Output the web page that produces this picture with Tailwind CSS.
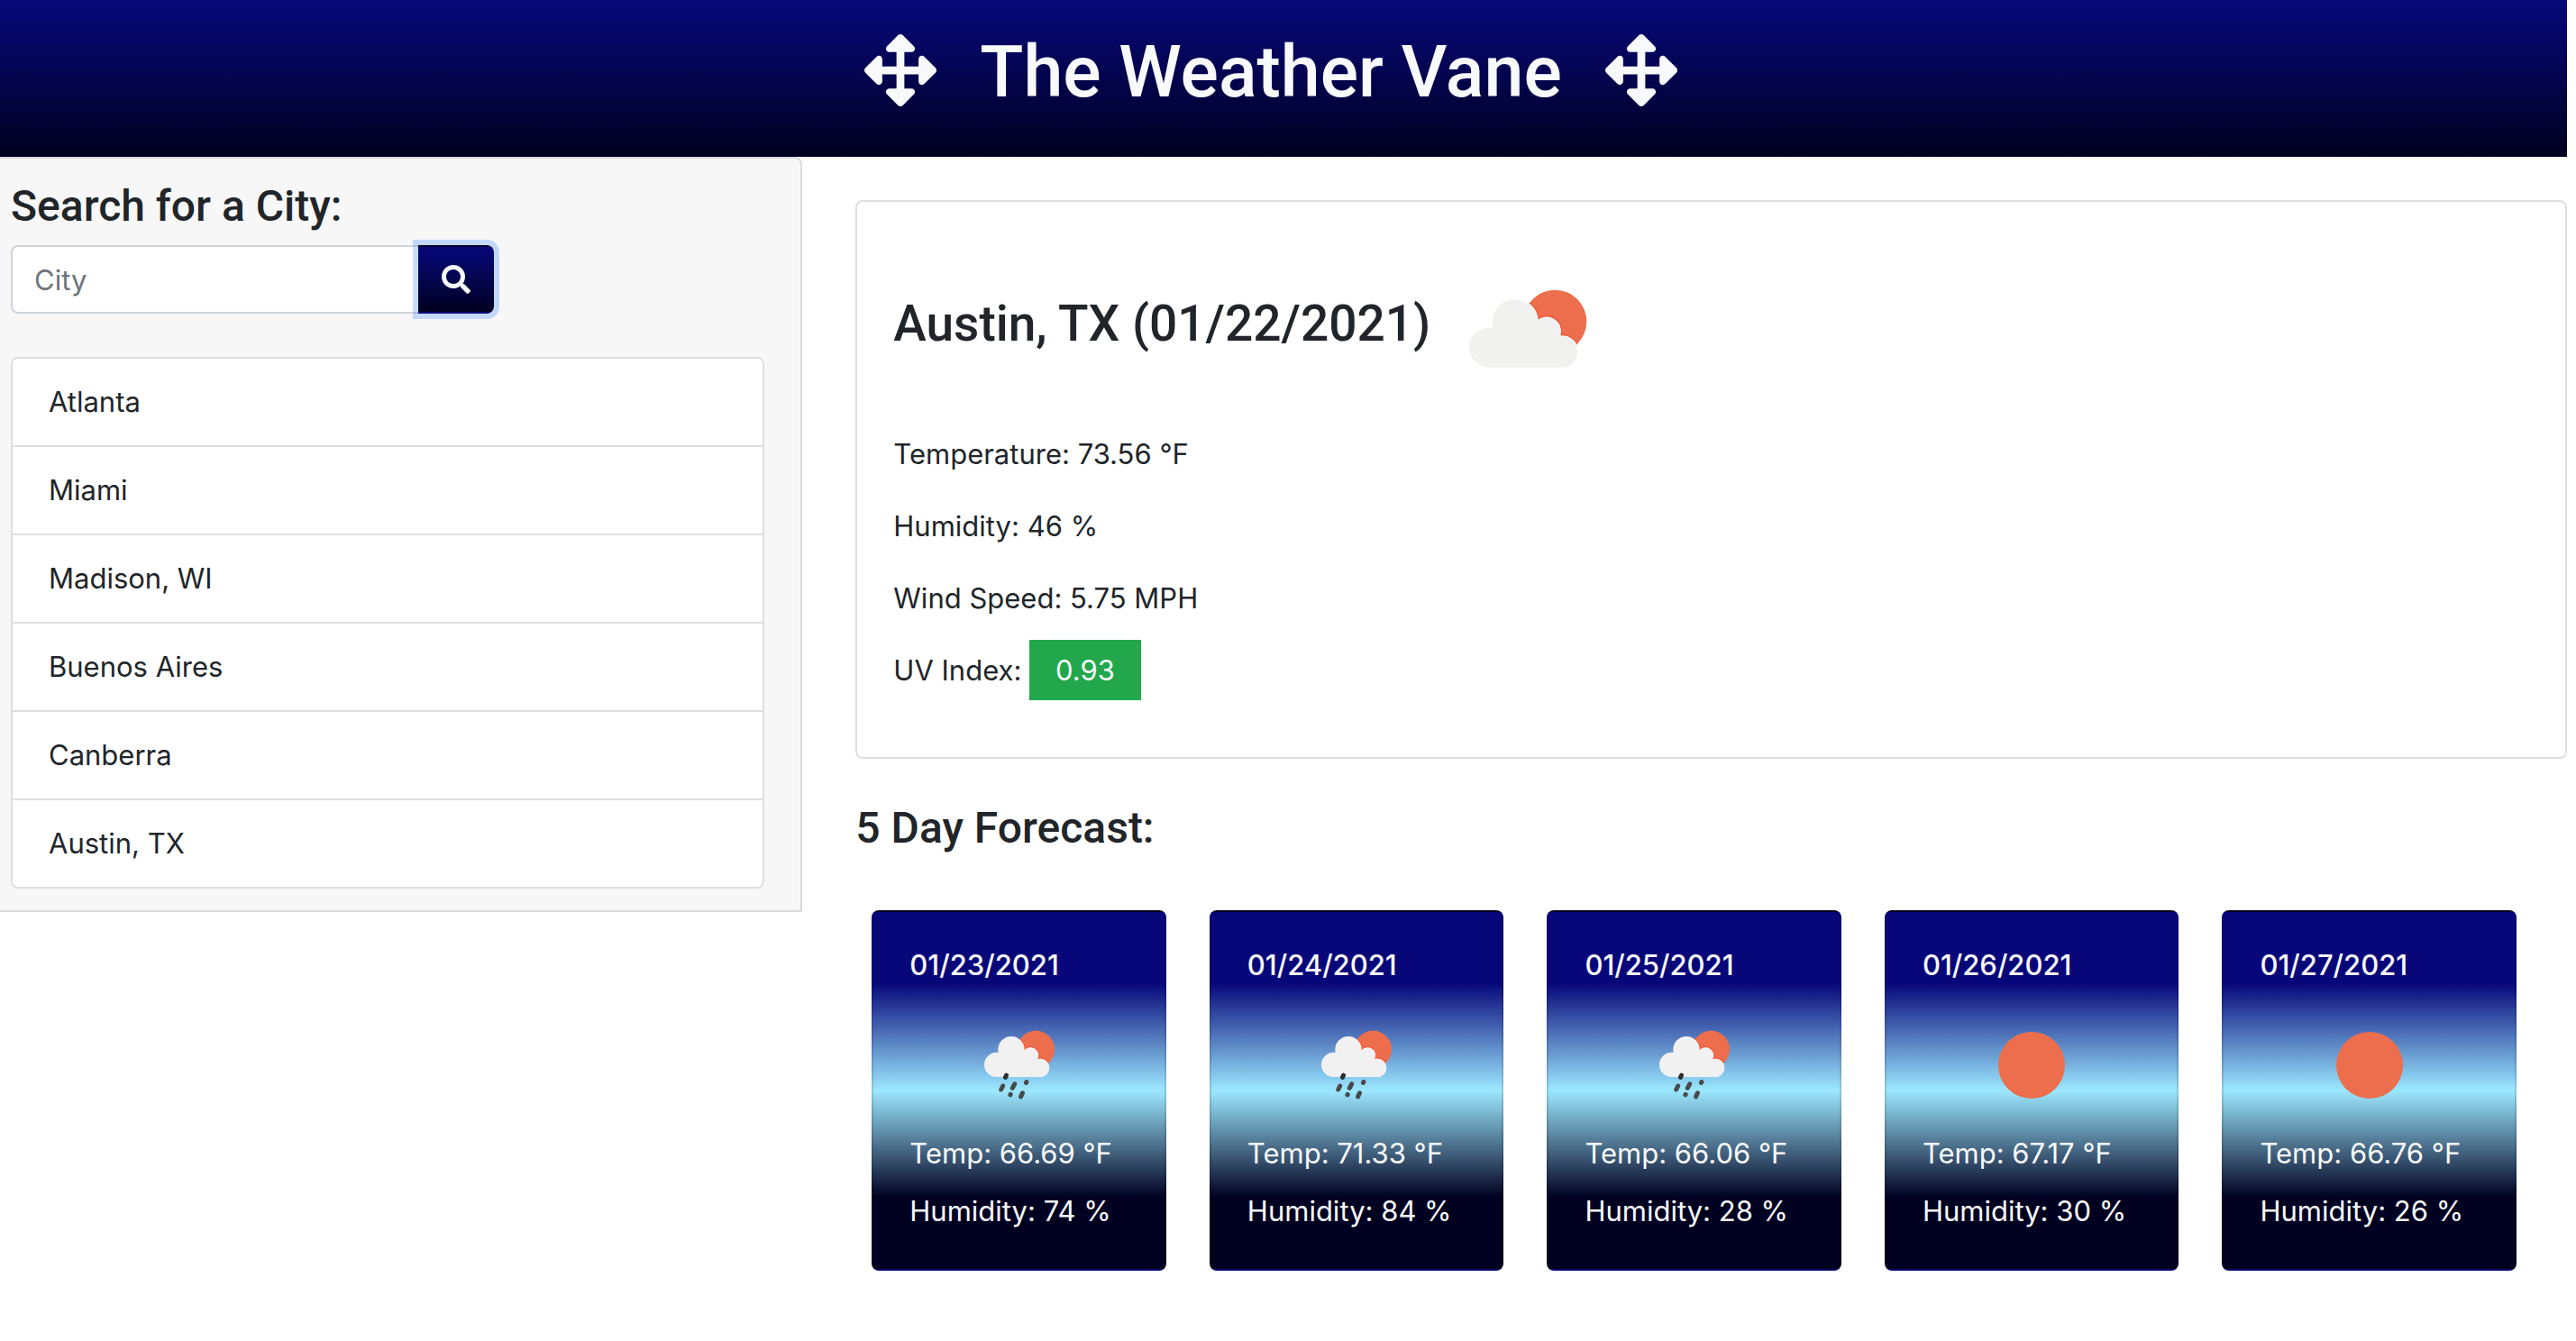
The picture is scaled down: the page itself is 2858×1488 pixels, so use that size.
<!DOCTYPE html>
<html lang="en">
<head>
<meta charset="utf-8">
<meta name="viewport" content="width=device-width, initial-scale=1">
<title>The Weather Vane</title>
<script src="https://cdn.jsdelivr.net/npm/@tailwindcss/browser@4"></script>
</head>
<body class="bg-white pr-2.5 font-['Inter',sans-serif] text-[31px] leading-[48px] text-[#212529]">

<!-- Shared icon shapes -->
<svg class="absolute size-0" aria-hidden="true">
  <defs>
    <symbol id="arrows" viewBox="0 0 512 512">
      <path fill="currentColor" d="M352.201 425.775l-79.196 79.196c-9.373 9.373-24.568 9.373-33.941 0l-79.196-79.196c-15.119-15.119-4.411-40.971 16.971-40.970h51.162L228 284H127.196v51.162c0 21.382-25.851 32.090-40.971 16.971L7.029 272.937c-9.373-9.373-9.373-24.569 0-33.941L86.225 159.800c15.119-15.119 40.971-4.411 40.971 16.971V228H228V127.196h-51.230c-21.382 0-32.090-25.851-16.971-40.971l79.196-79.196c9.373-9.373 24.568-9.373 33.941 0l79.196 79.196c15.119 15.119 4.411 40.971-16.971 40.971h-51.162V228h100.804v-51.162c0-21.382 25.851-32.090 40.970-16.971l79.196 79.196c9.373 9.373 9.373 24.569 0 33.941L425.773 352.200c-15.119 15.119-40.971 4.411-40.970-16.971V284H284v100.804h51.230c21.382 0 32.090 25.851 16.971 40.971z"/>
    </symbol>
    <clipPath id="sun-lg"><circle cx="130.300" cy="92.700" r="35"/></clipPath>
    <g id="cloud-lg">
      <circle cx="57" cy="121.500" r="22"/><circle cx="85.300" cy="93.300" r="25"/>
      <circle cx="121" cy="103.500" r="14.500"/><circle cx="138" cy="126.700" r="17"/>
      <path d="M57 143.700H138V115H121V100H75V115H57z"/>
    </g>
    <clipPath id="sun-sm"><circle cx="68.300" cy="32.300" r="20.700"/></clipPath>
    <g id="cloud-sm">
      <circle cx="24.700" cy="49.400" r="13.700"/><circle cx="41" cy="32.700" r="14.700"/>
      <circle cx="62.300" cy="39" r="9"/><circle cx="73" cy="52.800" r="10.400"/>
      <path d="M24.700 63.100H73V46H62V36H35V46H24.700z"/>
    </g>
    <symbol id="partly-cloudy" viewBox="0 0 200 200">
      <circle cx="130.300" cy="92.700" r="35" fill="#ec6e4c"/>
      <g clip-path="url(#sun-lg)">
        <use href="#cloud-lg" fill="#ee5a38" stroke="#ee5a38" stroke-width="6"/>
        <use href="#cloud-lg" fill="#eef5fa" stroke="#eef5fa" stroke-width="3"/>
      </g>
      <use href="#cloud-lg" fill="#f1f1f0"/>
    </symbol>
    <symbol id="rain" viewBox="0 0 100 100">
      <circle cx="68.300" cy="32.300" r="20.700" fill="#ec6e4c"/>
      <g clip-path="url(#sun-sm)">
        <use href="#cloud-sm" fill="#fb4f30" stroke="#fb4f30" stroke-width="2"/>
      </g>
      <use href="#cloud-sm" fill="#f1f1f2"/>
      <g stroke="#48484a" stroke-width="5" stroke-linecap="round">
        <path d="M35.500 61.200L34.500 63.400" stroke="#2e2e2e"/>
        <path d="M31.700 73L29.700 77"/><path d="M44.700 70.800L42.300 75.400"/>
        <path d="M57.900 68.600L57.500 69.400"/><path d="M40.200 82.400L39.900 82.900"/><path d="M53.400 80.900L51.600 84.900"/>
      </g>
    </symbol>
    <symbol id="sun" viewBox="0 0 100 100"><circle cx="50" cy="50" r="37" fill="#ec6e4c"/></symbol>
  </defs>
</svg>

<header class="flex items-center justify-center gap-12 bg-linear-to-b/srgb from-[#07087a] to-[#000020] pt-[30px] pr-7 pb-12 text-[#f8f9fa]">
  <svg class="size-20" aria-hidden="true"><use href="#arrows"/></svg>
  <h1 class="pt-1 font-['Roboto',sans-serif] text-[79px] leading-[92px] font-medium">The Weather Vane</h1>
  <svg class="size-20" aria-hidden="true"><use href="#arrows"/></svg>
</header>

<div class="grid grid-cols-3 items-start">
  <aside class="mr-[59px] rounded-tr-lg border-2 border-l-0 border-[#d9d9d9] bg-[#f7f7f7] pt-6 pr-10 pb-6 pl-3">
    <form>
      <label for="city" class="mb-3.5 block font-['Roboto',sans-serif] text-[48px] leading-[58px] font-medium">Search for a City:</label>
      <div class="flex w-[536px] max-w-full">
        <input id="city" type="text" placeholder="City" class="h-[76px] min-w-0 flex-1 rounded-l-lg border-2 border-r-0 border-[#ced4da] bg-white px-6 outline-none placeholder:text-[#6c757d]">
        <button type="button" aria-label="Search" class="flex h-[76px] w-[84px] items-center justify-center rounded-r-lg border-2 border-transparent bg-linear-to-b/srgb from-[#07087a] to-[#000020] text-[#f8f9fa] shadow-[0_0_0_6px_rgba(38,118,255,0.25)]">
          <svg class="size-8" viewBox="0 0 512 512" aria-hidden="true"><path fill="currentColor" d="M505 442.700L405.300 343c-4.500-4.500-10.600-7-17-7H372c27.600-35.300 44-79.700 44-128C416 93.100 322.900 0 208 0S0 93.100 0 208s93.100 208 208 208c48.300 0 92.700-16.400 128-44v16.300c0 6.400 2.500 12.500 7 17l99.700 99.700c9.400 9.400 24.600 9.400 33.900 0l28.300-28.300c9.400-9.400 9.400-24.600.1-34zM208 336c-70.700 0-128-57.200-128-128 0-70.700 57.200-128 128-128 70.700 0 128 57.200 128 128 0 70.700-57.200 128-128 128z"/></svg>
        </button>
      </div>
    </form>
    <ul class="mt-12 divide-y-2 divide-[#dfdfdf] overflow-hidden rounded-lg border-2 border-[#dfdfdf] bg-white">
      <li class="px-10 py-6">Atlanta</li>
      <li class="px-10 py-6">Miami</li>
      <li class="px-10 py-6">Madison, WI</li>
      <li class="px-10 py-6">Buenos Aires</li>
      <li class="px-10 py-6">Canberra</li>
      <li class="px-10 py-6">Austin, TX</li>
    </ul>
  </aside>

  <main class="col-span-2 pt-12">
    <section class="rounded-lg border-2 border-[#dfdfdf] p-10">
      <div class="mb-4 flex items-center gap-2">
        <h2 class="pb-2.5 font-['Roboto',sans-serif] text-[55px] leading-[68px] font-medium">Austin, TX (01/22/2021)</h2>
        <svg class="size-[200px]" role="img" aria-label="Partly cloudy"><use href="#partly-cloudy"/></svg>
      </div>
      <p class="mb-8">Temperature: 73.56 °F</p>
      <p class="mb-8">Humidity: 46 %</p>
      <p class="mb-8">Wind Speed: 5.75 MPH</p>
      <p class="mb-8">UV Index: <span class="bg-[#22a74c] px-[29px] py-[15px] text-[#f8f9fa]">0.93</span></p>
    </section>

    <h2 class="mt-12 font-['Roboto',sans-serif] text-[48px] leading-[58px] font-medium">5 Day Forecast:</h2>

    <div class="mt-[62px] grid grid-cols-5 gap-12 pr-14 pl-[18px]">
      <article class="rounded-lg border-2 border-black/12 bg-linear-to-b/srgb from-[#07077a] from-20% via-[#9ce8ff] via-50% to-[#000020] to-80% p-10 whitespace-nowrap text-[#f8f9fa]">
        <h3 class="leading-[38px] font-medium">01/23/2021</h3>
        <svg class="mx-auto mt-[42px] mb-6 size-[100px]" role="img" aria-label="Rain"><use href="#rain"/></svg>
        <p class="mb-4">Temp: 66.69 °F</p>
        <p>Humidity: 74 %</p>
      </article>
      <article class="rounded-lg border-2 border-black/12 bg-linear-to-b/srgb from-[#07077a] from-20% via-[#9ce8ff] via-50% to-[#000020] to-80% p-10 whitespace-nowrap text-[#f8f9fa]">
        <h3 class="leading-[38px] font-medium">01/24/2021</h3>
        <svg class="mx-auto mt-[42px] mb-6 size-[100px]" role="img" aria-label="Rain"><use href="#rain"/></svg>
        <p class="mb-4">Temp: 71.33 °F</p>
        <p>Humidity: 84 %</p>
      </article>
      <article class="rounded-lg border-2 border-black/12 bg-linear-to-b/srgb from-[#07077a] from-20% via-[#9ce8ff] via-50% to-[#000020] to-80% p-10 whitespace-nowrap text-[#f8f9fa]">
        <h3 class="leading-[38px] font-medium">01/25/2021</h3>
        <svg class="mx-auto mt-[42px] mb-6 size-[100px]" role="img" aria-label="Rain"><use href="#rain"/></svg>
        <p class="mb-4">Temp: 66.06 °F</p>
        <p>Humidity: 28 %</p>
      </article>
      <article class="rounded-lg border-2 border-black/12 bg-linear-to-b/srgb from-[#07077a] from-20% via-[#9ce8ff] via-50% to-[#000020] to-80% p-10 whitespace-nowrap text-[#f8f9fa]">
        <h3 class="leading-[38px] font-medium">01/26/2021</h3>
        <svg class="mx-auto mt-[42px] mb-6 size-[100px]" role="img" aria-label="Clear"><use href="#sun"/></svg>
        <p class="mb-4">Temp: 67.17 °F</p>
        <p>Humidity: 30 %</p>
      </article>
      <article class="rounded-lg border-2 border-black/12 bg-linear-to-b/srgb from-[#07077a] from-20% via-[#9ce8ff] via-50% to-[#000020] to-80% p-10 whitespace-nowrap text-[#f8f9fa]">
        <h3 class="leading-[38px] font-medium">01/27/2021</h3>
        <svg class="mx-auto mt-[42px] mb-6 size-[100px]" role="img" aria-label="Clear"><use href="#sun"/></svg>
        <p class="mb-4">Temp: 66.76 °F</p>
        <p>Humidity: 26 %</p>
      </article>
    </div>
  </main>
</div>
</body>
</html>
